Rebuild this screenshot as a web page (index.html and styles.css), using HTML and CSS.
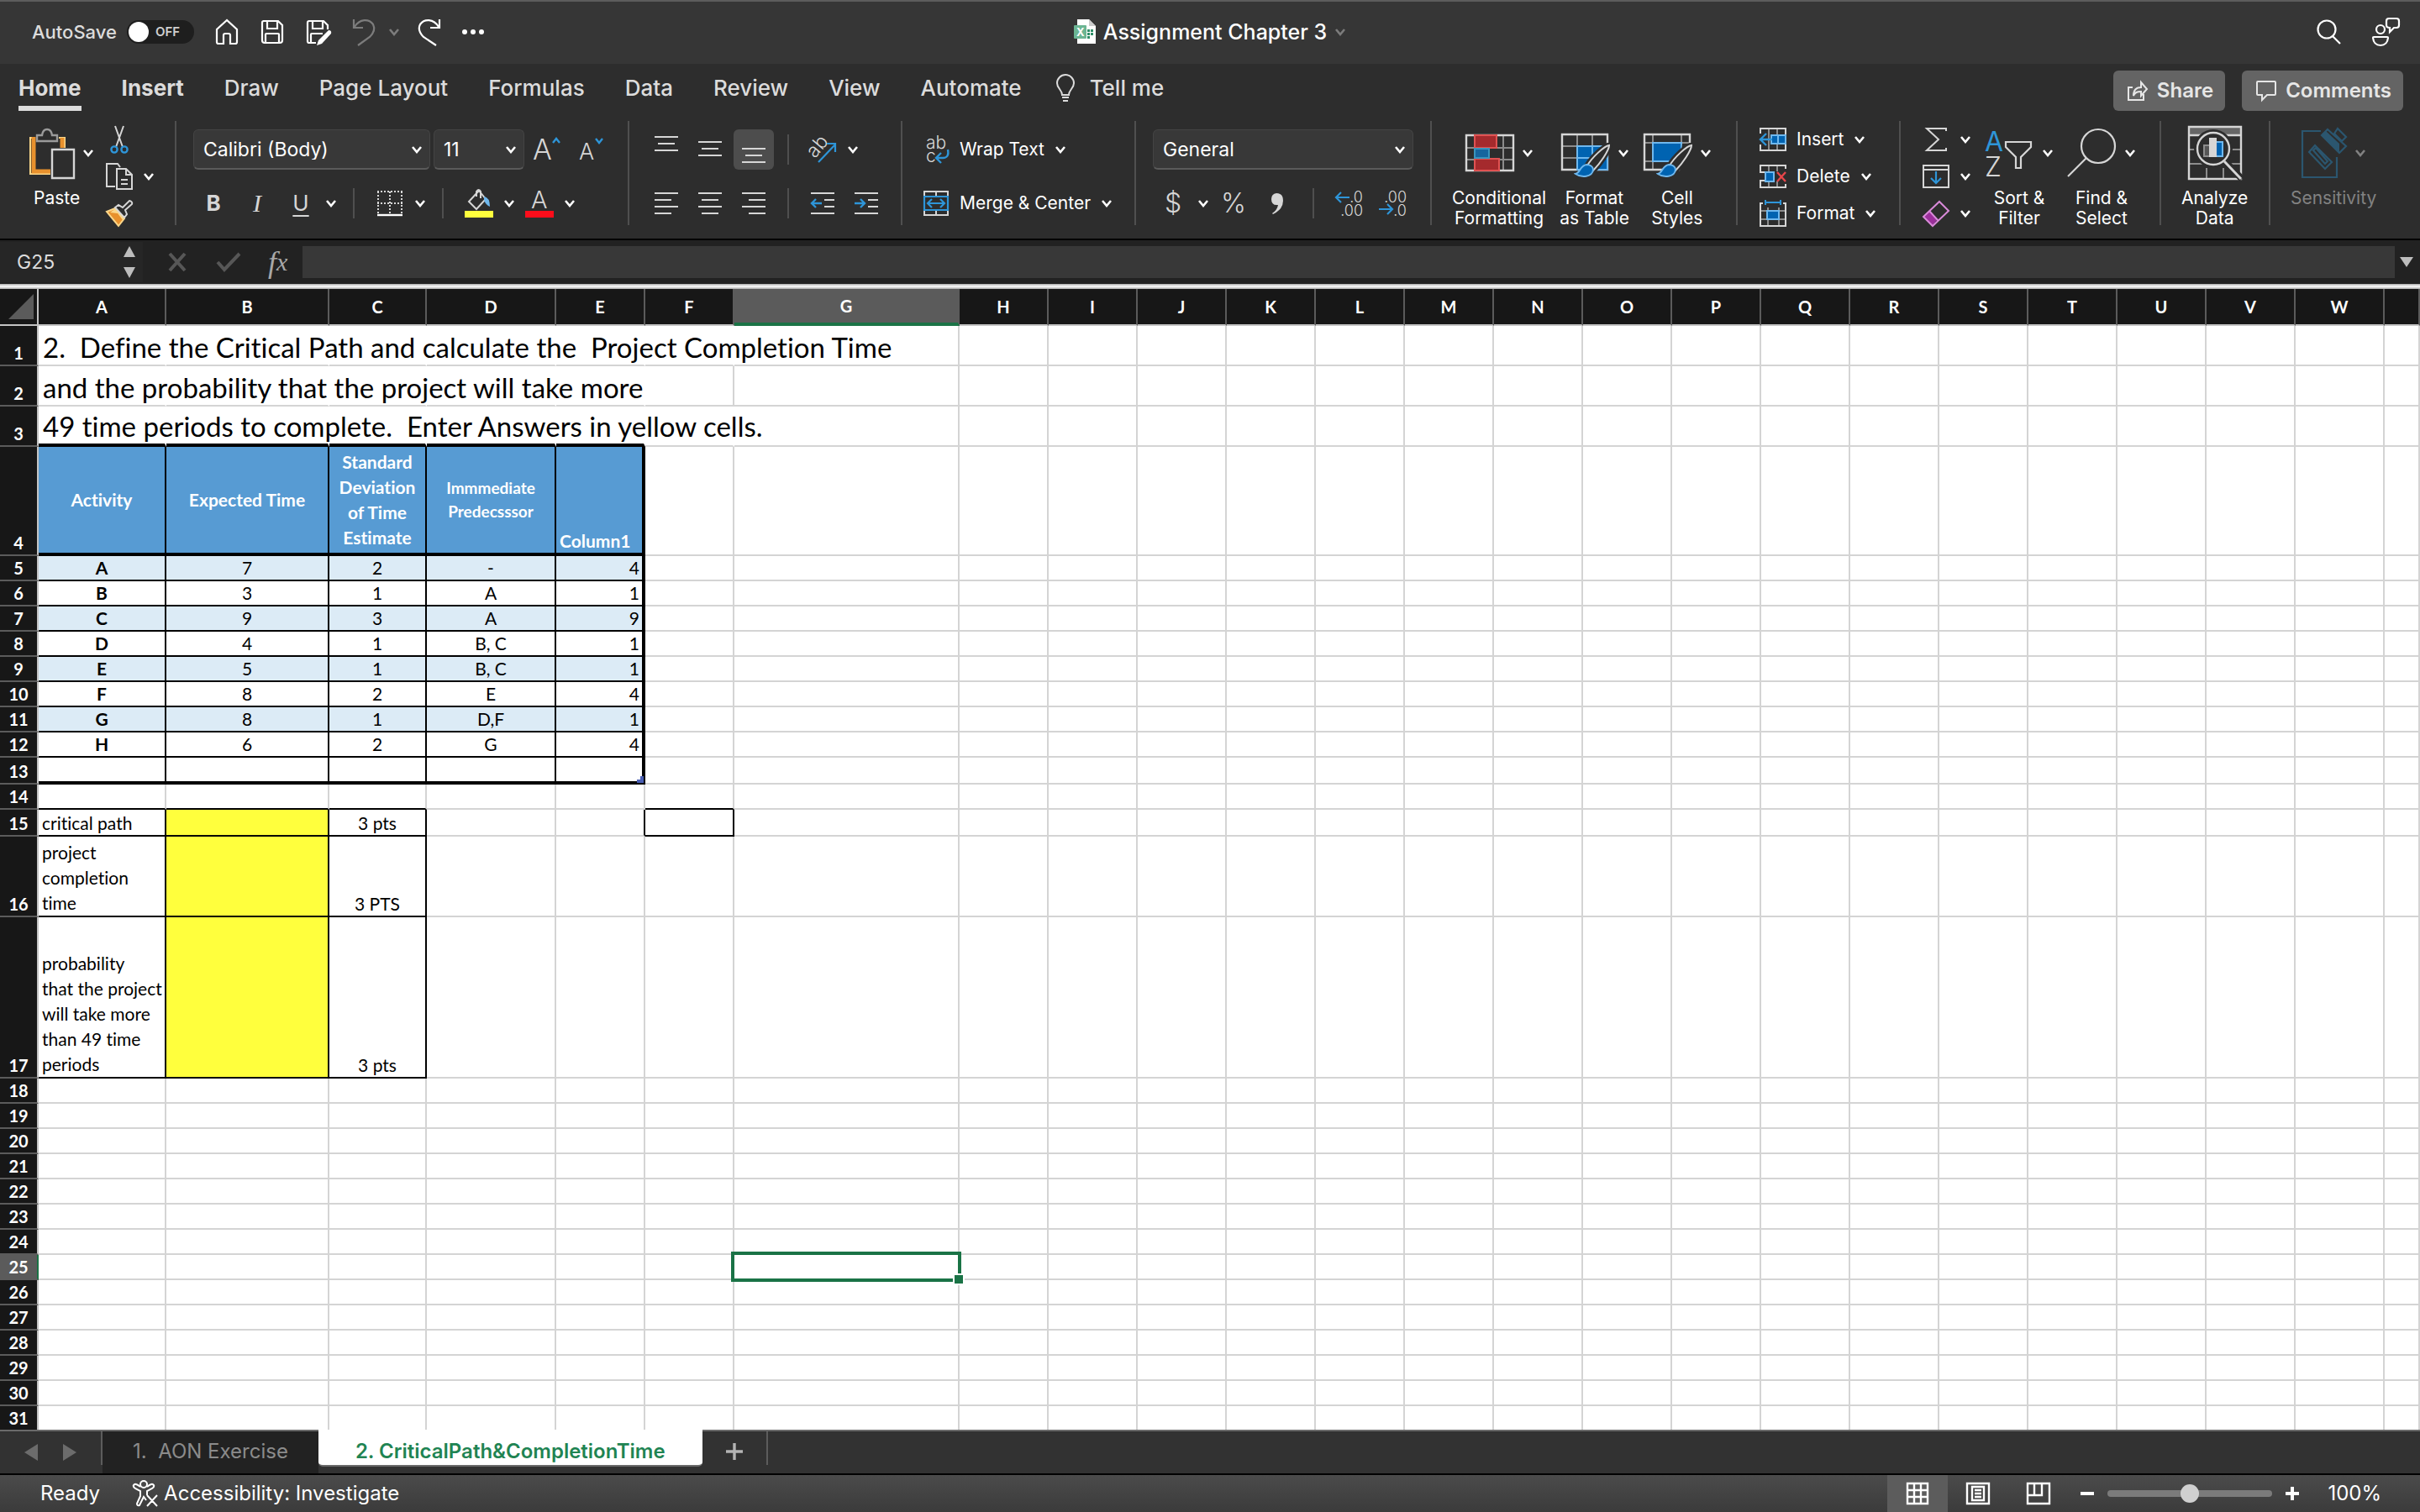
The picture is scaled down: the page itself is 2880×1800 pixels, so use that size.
FILE: index.html
```html
<!DOCTYPE html>
<html lang="en">
<head>
	<meta charset="UTF-8">
	<title>Assignment Chapter 3</title>
	<link rel="stylesheet" href="styles.css">
</head>
<body>
	<!-- shared icons -->
	<svg class="defs" width="0" height="0">
		<symbol id="chev" viewBox="0 0 14 10"><path d="M2 2l5 6 5-6" fill="none" stroke="currentColor" stroke-width="2.6"/></symbol>
		<symbol id="brush" viewBox="0 0 46 42">
			<path d="M42 3C36 4 22 17 16 27l7 6C31 25 42 9 42 3z" fill="#2d2d2d" stroke="#2d2d2d" stroke-width="7"/>
			<path d="M42 3C36 4 22 17 16 27l7 6C31 25 42 9 42 3z" fill="#2d2d2d" stroke="#d6d6d6" stroke-width="2"/>
			<path d="M15 26c-8 1-7 10-13 11 7 5 20 4 21-5 0-4-4-6-8-6z" fill="#0063b1" stroke="#6fb8ee" stroke-width="2"/>
		</symbol>
	</svg>

	<header class="titlebar">
		<div class="quick">
			<label class="autosave" for="autosave">AutoSave</label>
			<span class="toggle"><input type="checkbox" id="autosave"><span>OFF</span></span>
			<button aria-label="Home"><svg width="30" height="32" viewBox="0 0 30 32"><path d="M15 2L3 13v15q0 2 2 2h6V20q0-2 2-2h4q2 0 2 2v10h6q2 0 2-2V13z"/></svg></button>
			<button aria-label="Save"><svg width="30" height="32" viewBox="0 0 30 32"><path d="M4 3h18l5 5v18q0 3-3 3H6q-3 0-3-3V5q0-2 2-2zM9 3v9h12V3M7 29V19q0-1 1-1h14q1 0 1 1v10"/></svg></button>
			<button aria-label="Save as"><svg width="32" height="32" viewBox="0 0 32 32"><path d="M13 29H5q-2 0-2-2V5q0-2 2-2h17l5 5v5M9 3v9h12V3M7 29V19q0-1 1-1h13"/><path d="M28 14q4 0 3 4L20 30l-6 2 2-6z" fill="#fff" stroke="none"/></svg></button>
			<button aria-label="Undo" class="dim"><svg width="28" height="34" viewBox="0 0 28 34"><path d="M2 2v10h11M3 11C9 1 20 1 25 8c3 6 0 11-4 15L7 33"/></svg></button>
			<button aria-label="Undo list" class="dim caret"><svg width="14" height="10"><use href="#chev"/></svg></button>
			<button aria-label="Redo"><svg width="28" height="34" viewBox="0 0 28 34"><path d="M26 2v10H15M25 11C19 1 8 1 3 8c-3 6 0 11 4 15l15 10"/></svg></button>
			<button aria-label="More"><svg width="28" height="8" viewBox="0 0 28 8"><g fill="#fff" stroke="none"><circle cx="4" cy="4" r="3"/><circle cx="14" cy="4" r="3"/><circle cx="24" cy="4" r="3"/></g></svg></button>
		</div>
		<div class="doc">
			<svg width="28" height="32" viewBox="0 0 28 32"><path d="M5 1h14l8 8v21H5z" fill="#fff"/><path d="M19 1l8 8h-8z" fill="#ccc"/><path d="M17 13h3v3h-3zM21 13h3v3h-3zM17 17h3v3h-3zM21 17h3v3h-3zM17 21h3v3h-3z" fill="#2f8f68"/><rect x="1" y="8" width="15" height="16" rx="1" fill="#6bb593"/><text x="4" y="21" font-size="13" font-weight="700" fill="#fff">X</text></svg>
			<h1>Assignment Chapter 3</h1>
			<svg width="16" height="10" class="dim"><use href="#chev"/></svg>
		</div>
		<div class="corner">
			<button aria-label="Search"><svg width="32" height="32" viewBox="0 0 32 32"><circle cx="13" cy="13" r="10.5"/><path d="M20 21l9 9"/></svg></button>
			<button aria-label="Presence"><svg width="34" height="36" viewBox="0 0 34 36"><circle cx="11" cy="15" r="5"/><path d="M3 24h16q1 0 1 1-1 9-9 9t-9-9q0-1 1-1zM21 2h9q3 0 3 3v5q0 3-3 3h-3l-5 5v-5q-4 0-4-3V5q0-3 3-3z"/></svg></button>
		</div>
	</header>

	<nav class="tabs">
		<a href="#" class="on">Home</a>
		<a href="#" class="bold">Insert</a>
		<a href="#">Draw</a>
		<a href="#">Page Layout</a>
		<a href="#">Formulas</a>
		<a href="#">Data</a>
		<a href="#">Review</a>
		<a href="#">View</a>
		<a href="#">Automate</a>
		<a href="#" class="tell"><svg width="24" height="34" viewBox="0 0 24 34"><path d="M8 25c0-6-6-8-6-14a10 10 0 0 1 20 0c0 6-6 8-6 14zM8 28h8M9 32h6" fill="none" stroke="#dcdcdc" stroke-width="2"/></svg>Tell me</a>
		<div class="share">
			<button><svg width="26" height="26" viewBox="0 0 26 26"><path d="M7 9H2v15h18v-7M8 19c0-8 4-10 9-10V3l7 8-7 8v-5c-5 0-7 1-9 5z"/></svg>Share</button>
			<button><svg width="26" height="26" viewBox="0 0 26 26"><path d="M3 2h20q1 0 1 1v14q0 1-1 1H14l-6 6v-6H3q-1 0-1-1V3q0-1 1-1z"/></svg>Comments</button>
		</div>
	</nav>

	<section class="ribbon">
		<div class="group g-clip">
			<button class="big">
				<span class="pic"><svg width="56" height="64" viewBox="0 0 56 64"><path d="M8 14H2v43h24M36 14h7v12" fill="none" stroke="#fbd78a" stroke-width="2"/><path d="M6 13v41h20M40 14v12" fill="none" stroke="#e8912d" stroke-width="5"/><path d="M10 18v-7h6q1-7 6-7t6 7h6v7z" fill="#2d2d2d" stroke="#9a9a9a" stroke-width="2.4"/><path d="M28 28h26v34H28z" fill="#2d2d2d" stroke="#d6d6d6" stroke-width="2.4"/></svg><svg width="14" height="10"><use href="#chev"/></svg></span>
				<span>Paste</span>
			</button>
			<div class="stack">
				<button aria-label="Cut"><svg width="32" height="34" viewBox="0 0 32 34"><path d="M11 1l9 25M21 1l-9 25" fill="none" stroke="#d6d6d6" stroke-width="2"/><circle cx="10" cy="29" r="3.6" fill="none" stroke="#2e95d8" stroke-width="2.4"/><circle cx="22" cy="29" r="3.6" fill="none" stroke="#2e95d8" stroke-width="2.4"/></svg></button>
				<button aria-label="Copy"><svg width="32" height="32" viewBox="0 0 32 32"><path d="M11 28H1V1h13l3 4" fill="none" stroke="#d6d6d6" stroke-width="2"/><path d="M13 7h11l7 7v17H13zM24 7v7h7M18 20h8M18 25h8" fill="none" stroke="#d6d6d6" stroke-width="2"/></svg><svg width="14" height="10"><use href="#chev"/></svg></button>
				<button aria-label="Format painter"><svg width="32" height="32" viewBox="0 0 32 32"><path d="M1 14l10-4 11 12-7 9z" fill="#e8912d" stroke="#fbd78a" stroke-width="2"/><path d="M5 15l9 1 6 8 3-4-11-10z" fill="#fbd78a"/><path d="M11 9l4-3 5 3 8-8q4 1 3 4l-8 7 2 5-3 4z" fill="#2d2d2d" stroke="#d6d6d6" stroke-width="2"/></svg></button>
			</div>
		</div>

		<div class="group g-font">
			<div class="rows">
				<div class="row">
					<span class="drop font"><select aria-label="Font"><option>Calibri (Body)</option></select><svg width="14" height="10"><use href="#chev"/></svg></span>
					<span class="drop size"><select aria-label="Font size"><option>11</option></select><svg width="14" height="10"><use href="#chev"/></svg></span>
					<button class="tool" aria-label="Grow font"><svg width="36" height="36" viewBox="0 0 36 36"><text x="0" y="30" font-size="34" font-weight="300" fill="#d6d6d6">A</text><path d="M24 10l4-5 4 5" fill="none" stroke="#2e95d8" stroke-width="2.4"/></svg></button>
					<button class="tool" aria-label="Shrink font"><svg width="36" height="36" viewBox="0 0 36 36"><text x="3" y="30" font-size="27" font-weight="300" fill="#d6d6d6">A</text><path d="M23 5l4 5 4-5" fill="none" stroke="#2e95d8" stroke-width="2.4"/></svg></button>
				</div>
				<div class="row">
					<button class="tool b">B</button>
					<button class="tool i">I</button>
					<button class="tool u">U</button>
					<button class="caret" aria-label="Underline options"><svg width="14" height="10"><use href="#chev"/></svg></button>
					<span class="vsep"></span>
					<button class="tool" aria-label="Borders"><svg width="32" height="32" viewBox="0 0 32 32"><path d="M1 2h30M1 16h30M2 2v26M16 2v26M30 2v26" fill="none" stroke="#d6d6d6" stroke-width="2" stroke-dasharray="2 2"/><path d="M1 30h30" stroke="#fff" stroke-width="2.4"/></svg></button>
					<button class="caret" aria-label="Border options"><svg width="14" height="10"><use href="#chev"/></svg></button>
					<span class="vsep"></span>
					<button class="tool" aria-label="Fill color"><svg width="34" height="34" viewBox="0 0 34 34"><path d="M17 2L5 15l9 9 11-12zM14 9V3q3-4 5 0v8" fill="none" stroke="#d6d6d6" stroke-width="2"/><path d="M23 9q7 1 7 12-5-2-7-8z" fill="#6fb8ee"/><path d="M0 26h34v8H0z" fill="#ffff3d"/></svg></button>
					<button class="caret" aria-label="Fill options"><svg width="14" height="10"><use href="#chev"/></svg></button>
					<button class="tool" aria-label="Font color"><svg width="34" height="34" viewBox="0 0 34 34"><text x="7" y="23" font-size="29" font-weight="300" fill="#d6d6d6">A</text><path d="M0 26h34v8H0z" fill="#fc0d1b"/></svg></button>
					<button class="caret" aria-label="Font color options"><svg width="14" height="10"><use href="#chev"/></svg></button>
				</div>
			</div>
		</div>

		<div class="group g-align">
			<div class="rows">
				<div class="row">
					<button class="tool lines" aria-label="Top align"><svg width="28" height="32" viewBox="0 0 28 32"><path d="M0 1h28M4 9h20M0 17h28"/></svg></button>
					<button class="tool lines" aria-label="Middle align"><svg width="28" height="32" viewBox="0 0 28 32"><path d="M0 7h28M4 15h20M0 23h28"/></svg></button>
					<button class="tool lines pressed" aria-label="Bottom align"><svg width="28" height="32" viewBox="0 0 28 32"><path d="M0 15h28M4 23h20M0 31h28"/></svg></button>
					<span class="vsep tight"></span>
					<button class="tool" aria-label="Orientation"><svg width="36" height="34" viewBox="0 0 36 34"><text x="4" y="24" font-size="23" font-weight="300" fill="#d6d6d6" transform="rotate(-50 11 21)">ab</text><path d="M13 32L33 11M23 10h10v10" fill="none" stroke="#2e95d8" stroke-width="2.2"/></svg></button>
					<button class="caret" aria-label="Orientation options"><svg width="14" height="10"><use href="#chev"/></svg></button>
				</div>
				<div class="row">
					<button class="tool lines" aria-label="Align left"><svg width="28" height="28" viewBox="0 0 28 28"><path d="M0 2h28M0 10h20M0 18h28M0 26h20"/></svg></button>
					<button class="tool lines" aria-label="Center"><svg width="28" height="28" viewBox="0 0 28 28"><path d="M0 2h28M4 10h20M0 18h28M4 26h20"/></svg></button>
					<button class="tool lines" aria-label="Align right"><svg width="28" height="28" viewBox="0 0 28 28"><path d="M0 2h28M8 10h20M0 18h28M8 26h20"/></svg></button>
					<span class="vsep tight"></span>
					<button class="tool lines" aria-label="Decrease indent"><svg width="28" height="28" viewBox="0 0 28 28"><path d="M0 2h28M16 10h12M16 18h12M0 26h28"/><path class="blue" d="M13 14H1M6 9l-5 5 5 5"/></svg></button>
					<button class="tool lines" aria-label="Increase indent"><svg width="28" height="28" viewBox="0 0 28 28"><path d="M0 2h28M16 10h12M16 18h12M0 26h28"/><path class="blue" d="M0 14h12M7 9l5 5-5 5"/></svg></button>
				</div>
			</div>
		</div>

		<div class="group g-wrap">
			<div class="rows">
				<button class="row wide"><svg width="32" height="34" viewBox="0 0 32 34"><text x="4" y="16" font-size="21" font-weight="300" fill="#d6d6d6">ab</text><text x="4" y="32" font-size="21" font-weight="300" fill="#d6d6d6">c</text><path d="M30 17q2 10-6 10h-7M22 21l-6 6 6 6" fill="none" stroke="#2e95d8" stroke-width="2.4"/></svg>Wrap Text<svg width="14" height="10"><use href="#chev"/></svg></button>
				<button class="row wide"><svg width="32" height="32" viewBox="0 0 32 32"><path d="M2 8V2h28v6M16 2v6M2 24v6h28v-6M16 24v6" fill="none" stroke="#d6d6d6" stroke-width="2"/><path d="M2 8h28v16H2zM7 16h18M11 11l-5 5 5 5M21 11l5 5-5 5" fill="none" stroke="#2e95d8" stroke-width="2.2"/></svg>Merge &amp; Center<svg width="14" height="10"><use href="#chev"/></svg></button>
			</div>
		</div>

		<div class="group g-num">
			<div class="rows">
				<div class="row">
					<span class="drop format"><select aria-label="Number format"><option>General</option></select><svg width="14" height="10"><use href="#chev"/></svg></span>
				</div>
				<div class="row">
					<button class="tool glyph">$</button>
					<button class="caret" aria-label="Currency options"><svg width="14" height="10"><use href="#chev"/></svg></button>
					<button class="tool glyph">%</button>
					<button class="tool" aria-label="Comma style"><svg width="16" height="28" viewBox="0 0 16 28"><path d="M7 2q8 0 8 9 0 10-12 16l-1-1q6-4 7-10-8 1-8-7 0-6 6-7z" fill="#d6d6d6"/></svg></button>
					<span class="vsep"></span>
					<button class="tool" aria-label="Increase decimal"><svg width="34" height="34" viewBox="0 0 34 34"><g font-size="18" font-weight="300" fill="#d6d6d6" text-anchor="end"><text x="33" y="16">.0</text><text x="33" y="32">.00</text></g><path d="M17 10H1M7 4l-6 6 6 6" fill="none" stroke="#2e95d8" stroke-width="2.2"/></svg></button>
					<button class="tool" aria-label="Decrease decimal"><svg width="34" height="34" viewBox="0 0 34 34"><g font-size="18" font-weight="300" fill="#d6d6d6" text-anchor="end"><text x="33" y="16">.00</text><text x="33" y="32">.0</text></g><path d="M0 24h16M10 18l6 6-6 6" fill="none" stroke="#2e95d8" stroke-width="2.2"/></svg></button>
				</div>
			</div>
		</div>

		<div class="group g-style">
			<button class="big">
				<span class="pic"><svg width="60" height="48" viewBox="0 0 60 48"><path d="M3 18h54M3 32h54M13 3v42M46 3v42" fill="none" stroke="#8c8c8c" stroke-width="2"/><path d="M2 3h56v42H2z" fill="none" stroke="#d6d6d6" stroke-width="2.4"/><path d="M12 3h26v15H12zM12 31h29v14H12z" fill="#a52a2d" stroke="#e05252" stroke-width="2"/><path d="M12 19h17v11H12z" fill="#16659e" stroke="#3a94bd" stroke-width="2"/></svg><svg width="14" height="10"><use href="#chev"/></svg></span>
				<span>Conditional<br>Formatting</span>
			</button>
			<button class="big">
				<span class="pic"><svg width="60" height="60" viewBox="0 0 60 60"><path d="M2 22h54M2 36h54M20 8v42M38 8v42" fill="none" stroke="#8c8c8c" stroke-width="2"/><path d="M2 8h54v42H2z" fill="none" stroke="#d6d6d6" stroke-width="2.4"/><path d="M20 22h36v28H20z" fill="#0063b1" stroke="#6fb8ee" stroke-width="2"/><path d="M20 36h36M38 22v28" stroke="#6fb8ee" stroke-width="2"/><use href="#brush" x="16" y="18" width="46" height="42"/></svg><svg width="14" height="10"><use href="#chev"/></svg></span>
				<span>Format<br>as Table</span>
			</button>
			<button class="big">
				<span class="pic"><svg width="60" height="60" viewBox="0 0 60 60"><path d="M2 18h54M2 40h54M12 8v42M46 8v42" fill="none" stroke="#8c8c8c" stroke-width="2"/><path d="M2 8h54v42H2z" fill="none" stroke="#d6d6d6" stroke-width="2.4"/><path d="M12 18h34v22H12z" fill="#0063b1" stroke="#6fb8ee" stroke-width="2"/><path d="M47 19h12v33H44z" fill="#2d2d2d"/><use href="#brush" x="16" y="18" width="46" height="42"/></svg><svg width="14" height="10"><use href="#chev"/></svg></span>
				<span>Cell<br>Styles</span>
			</button>
		</div>

		<div class="group g-cells">
			<div class="stack">
				<button><svg width="32" height="30" viewBox="0 0 32 30"><path d="M11 1v28M21 1v28" stroke="#8c8c8c" stroke-width="2"/><path d="M1 8V2h30v26H1v-7" fill="none" stroke="#d6d6d6" stroke-width="2"/><path d="M14 10h17v10H14z" fill="#0063b1" stroke="#6fb8ee" stroke-width="2"/><path d="M22 10v10" stroke="#6fb8ee" stroke-width="2"/><path d="M15 15H2M8 8l-7 7 7 7" fill="none" stroke="#2e95d8" stroke-width="2.4"/></svg>Insert<svg width="14" height="10"><use href="#chev"/></svg></button>
				<button><svg width="32" height="30" viewBox="0 0 32 30"><path d="M11 1v8M21 1v8M11 21v8M21 21v8" stroke="#8c8c8c" stroke-width="2"/><path d="M31 6V2H1v8h6M31 24v4H1v-8h6" fill="none" stroke="#d6d6d6" stroke-width="2"/><path d="M7 10h10v11H7z" fill="#0063b1" stroke="#6fb8ee" stroke-width="2"/><path d="M21 10l10 11M31 10L21 21" stroke="#e8464a" stroke-width="2.4"/></svg>Delete<svg width="14" height="10"><use href="#chev"/></svg></button>
				<button><svg width="32" height="34" viewBox="0 0 32 34"><path d="M10 10v22M23 10v22M2 14h28M2 24h28" stroke="#8c8c8c" stroke-width="2"/><path d="M4 5H1v27h30V5h-3" fill="none" stroke="#d6d6d6" stroke-width="2"/><path d="M9 14h14v10H9z" fill="#0063b1" stroke="#6fb8ee" stroke-width="2"/><path d="M7 1v6M25 1v6M7 4h18" stroke="#2e95d8" stroke-width="2"/></svg>Format<svg width="14" height="10"><use href="#chev"/></svg></button>
			</div>
		</div>

		<div class="group g-edit">
			<div class="stack">
				<button aria-label="AutoSum"><svg width="32" height="30" viewBox="0 0 32 30"><path d="M28 5V2H5l14 13L5 28h23v-3" fill="none" stroke="#d6d6d6" stroke-width="2"/></svg><svg width="14" height="10"><use href="#chev"/></svg></button>
				<button aria-label="Fill"><svg width="32" height="30" viewBox="0 0 32 30"><path d="M1 2h30v26H1zM1 7h30" fill="none" stroke="#d6d6d6" stroke-width="2"/><path d="M16 9v14M10 17l6 6 6-6" fill="none" stroke="#2e95d8" stroke-width="2.2"/></svg><svg width="14" height="10"><use href="#chev"/></svg></button>
				<button aria-label="Clear"><svg width="32" height="32" viewBox="0 0 32 32"><path d="M1 20l7-7 10 10-7 8z" fill="#9b2f9b"/><path d="M20 2l11 11-19 18L1 20zM8 13l10 11" fill="none" stroke="#d98ad9" stroke-width="2"/></svg><svg width="14" height="10"><use href="#chev"/></svg></button>
			</div>
			<button class="big">
				<span class="pic"><svg width="60" height="60" viewBox="0 0 60 60"><text x="0" y="28" font-size="32" fill="#2e95d8">A</text><text x="0" y="58" font-size="32" font-weight="300" fill="#d6d6d6">Z</text><path d="M25 17h30v6L43 35v13h-6V35L25 23z" fill="#2d2d2d" stroke="#d6d6d6" stroke-width="2.2"/></svg><svg width="14" height="10"><use href="#chev"/></svg></span>
				<span>Sort &amp;<br>Filter</span>
			</button>
			<button class="big">
				<span class="pic"><svg width="60" height="60" viewBox="0 0 60 60"><circle cx="37" cy="22" r="20" fill="none" stroke="#d6d6d6" stroke-width="2.2"/><path d="M23 36L1 58" stroke="#d6d6d6" stroke-width="2.2"/></svg><svg width="14" height="10"><use href="#chev"/></svg></span>
				<span>Find &amp;<br>Select</span>
			</button>
		</div>

		<div class="group g-data">
			<button class="big">
				<span class="pic"><svg width="64" height="64" viewBox="0 0 64 64"><path d="M1 1h62v10H1z" fill="#666"/><path d="M1 28h62M1 45h62M22 50v13M42 50v13" stroke="#8c8c8c" stroke-width="2"/><path d="M1 1h62v62H1zM1 11h62" fill="none" stroke="#d6d6d6" stroke-width="2.4"/><circle cx="30" cy="27" r="23" fill="#2d2d2d"/><circle cx="30" cy="27" r="19" fill="#2d2d2d" stroke="#d6d6d6" stroke-width="2.4"/><path d="M44 42l20 21" stroke="#2d2d2d" stroke-width="8"/><path d="M43 42l20 21" stroke="#d6d6d6" stroke-width="3"/><path d="M19 23h7v13h-7z" fill="#555" stroke="#8c8c8c" stroke-width="2"/><path d="M33 19h8v17h-8z" fill="#0063b1" stroke="#6fb8ee" stroke-width="2"/><path d="M25 14h9v23h-9z" fill="#d6d6d6"/></svg></span>
				<span>Analyze<br>Data</span>
			</button>
		</div>

		<div class="group g-sens">
			<button class="big" disabled>
				<span class="pic"><svg width="56" height="62" viewBox="0 0 56 62"><g fill="none" stroke="#2b566f" stroke-width="2.2"><path d="M24 5H2v55h41V36"/><path d="M10 30l7-8 20 20-8 8zM15 28l3-3 14 16-3 3z"/><path d="M25 10l7-7 22 20-8 8z"/><path d="M40 8l4-6 10 10-5 5z"/></g><path d="M25 10l5-5 16 15v11z" fill="#2b566f"/></svg><svg width="14" height="10"><use href="#chev"/></svg></span>
				<span>Sensitivity</span>
			</button>
		</div>
	</section>

	<div class="formula">
		<div class="namebox">
			<input type="text" value="G25" aria-label="Name box">
			<svg width="16" height="38" viewBox="0 0 16 38"><path d="M8 0l7 13H1zM8 38l7-13H1z" fill="#bdbdbd"/></svg>
		</div>
		<button aria-label="Cancel"><svg width="28" height="24" viewBox="0 0 28 24"><path d="M5 2l18 20M23 2L5 22" stroke="#575757" stroke-width="4"/></svg></button>
		<button aria-label="Enter"><svg width="30" height="24" viewBox="0 0 30 24"><path d="M2 12l8 9L28 2" fill="none" stroke="#575757" stroke-width="4"/></svg></button>
		<button class="fx" aria-label="Insert function">f<small>x</small></button>
		<input type="text" class="bar" aria-label="Formula bar">
		<button class="expand" aria-label="Expand"><svg width="16" height="12" viewBox="0 0 16 12"><path d="M0 0h16L8 12z" fill="#bdbdbd"/></svg></button>
	</div>

	<main class="sheet">
		<table id="grid">
			<colgroup>
				<col class="w-head"><col class="w-a"><col class="w-b"><col class="w-c"><col class="w-d"><col class="w"><col class="w"><col class="w-g">
				<col class="w"><col class="w"><col class="w"><col class="w"><col class="w"><col class="w"><col class="w"><col class="w">
				<col class="w"><col class="w"><col class="w"><col class="w"><col class="w"><col class="w"><col class="w"><col class="w"><col>
			</colgroup>
			<thead>
				<tr><th class="all"><svg width="30" height="30" viewBox="0 0 30 30"><path d="M30 0v30H0z" fill="#5b5b5b"/></svg></th><th>A</th><th>B</th><th>C</th><th>D</th><th>E</th><th>F</th><th class="sel">G</th><th>H</th><th>I</th><th>J</th><th>K</th><th>L</th><th>M</th><th>N</th><th>O</th><th>P</th><th>Q</th><th>R</th><th>S</th><th>T</th><th>U</th><th>V</th><th>W</th><th></th></tr>
			</thead>
			<tbody>
				<tr class="h48"><th>1</th><td class="title spill">2.  Define the Critical Path and calculate the  Project Completion Time</td><td class="spill"></td><td class="spill"></td><td class="spill"></td><td class="spill"></td><td class="spill"></td></tr>
				<tr class="h48"><th>2</th><td class="title spill">and the probability that the project will take more</td><td class="spill"></td><td class="spill"></td><td class="spill"></td><td class="spill"></td></tr>
				<tr class="h48"><th>3</th><td class="title spill edge">49 time periods to complete.  Enter Answers in yellow cells.</td><td class="spill edge"></td><td class="spill edge"></td><td class="spill edge"></td><td class="spill edge"></td><td class="spill"></td></tr>
				<tr class="h130"><th>4</th><td class="hd">Activity</td><td class="hd">Expected Time</td><td class="hd">Standard Deviation of Time Estimate</td><td class="hd small">Immmediate Predecsssor</td><td class="hd low last">Column1</td></tr>
				<tr class="band"><th>5</th><td class="k"><b>A</b></td><td class="k">7</td><td class="k">2</td><td class="k">-</td><td class="k num last">4</td></tr>
				<tr><th>6</th><td class="k"><b>B</b></td><td class="k">3</td><td class="k">1</td><td class="k">A</td><td class="k num last">1</td></tr>
				<tr class="band"><th>7</th><td class="k"><b>C</b></td><td class="k">9</td><td class="k">3</td><td class="k">A</td><td class="k num last">9</td></tr>
				<tr><th>8</th><td class="k"><b>D</b></td><td class="k">4</td><td class="k">1</td><td class="k">B, C</td><td class="k num last">1</td></tr>
				<tr class="band"><th>9</th><td class="k"><b>E</b></td><td class="k">5</td><td class="k">1</td><td class="k">B, C</td><td class="k num last">1</td></tr>
				<tr><th>10</th><td class="k"><b>F</b></td><td class="k">8</td><td class="k">2</td><td class="k">E</td><td class="k num last">4</td></tr>
				<tr class="band"><th>11</th><td class="k"><b>G</b></td><td class="k">8</td><td class="k">1</td><td class="k">D,F</td><td class="k num last">1</td></tr>
				<tr><th>12</th><td class="k"><b>H</b></td><td class="k">6</td><td class="k">2</td><td class="k">G</td><td class="k num last">4</td></tr>
				<tr class="h32"><th>13</th><td class="k edge"></td><td class="k edge"></td><td class="k edge"></td><td class="k edge"></td><td class="k edge last"><i class="resize"></i></td></tr>
				<tr><th>14</th><td class="under"></td><td class="under"></td><td class="under"></td><td></td><td></td><td class="under"></td></tr>
				<tr class="h32"><th>15</th><td class="k left">critical path</td><td class="k yellow"></td><td class="k">3 pts</td><td></td><td class="side"></td><td class="k"></td></tr>
				<tr class="h96"><th>16</th><td class="k left">project<br>completion<br>time</td><td class="k yellow"></td><td class="k">3 PTS</td></tr>
				<tr class="h192"><th>17</th><td class="k left">probability<br>that the project<br>will take more<br>than 49 time<br>periods</td><td class="k yellow"></td><td class="k">3 pts</td></tr>
			</tbody>
		</table>
	</main>

	<nav class="sheets">
		<div class="arrows">
			<button aria-label="Previous sheet"><svg width="16" height="20" viewBox="0 0 16 20"><path d="M16 0v20L0 10z" fill="#6c6c6c"/></svg></button>
			<button aria-label="Next sheet"><svg width="16" height="20" viewBox="0 0 16 20"><path d="M0 0v20l16-10z" fill="#6c6c6c"/></svg></button>
		</div>
		<a href="#" class="tab">1.  AON Exercise</a>
		<a href="#" class="tab open">2. CriticalPath&amp;CompletionTime</a>
		<button class="add" aria-label="Add sheet"><svg width="20" height="20" viewBox="0 0 20 20"><path d="M10 0v20M0 10h20" stroke="#b4b4b4" stroke-width="3.4"/></svg></button>
	</nav>

	<footer class="status">
		<span>Ready</span>
		<button class="access"><svg width="32" height="32" viewBox="0 0 32 32"><g fill="none" stroke="#fff" stroke-width="2"><circle cx="14" cy="5" r="4"/><path d="M10 8q-6-5-8-2-1 2 2 4l6 3v6L6 28q0 3 3 2l5-10 3 4M18 8q6-5 8-2 1 2-2 4l-6 3v5M18 18l12 13M30 18L18 31"/></g></svg>Accessibility: Investigate</button>
		<div class="views">
			<button class="on" aria-label="Normal"><svg width="28" height="28" viewBox="0 0 28 28"><path d="M2 2h24v24H2zM10 2v24M18 2v24M2 10h24M2 18h24"/></svg></button>
			<button aria-label="Page layout"><svg width="28" height="28" viewBox="0 0 28 28"><path d="M1 2h26v24H1zM7 6h14v16H7zM10 10h8M10 14h8M10 18h8"/></svg></button>
			<button aria-label="Page break"><svg width="28" height="28" viewBox="0 0 28 28"><path d="M1 2h26v24H1zM1 16h17V2M9 2v14"/></svg></button>
		</div>
		<button class="step" aria-label="Zoom out"><svg width="16" height="16" viewBox="0 0 16 16"><path d="M0 8h16" stroke="#fff" stroke-width="4"/></svg></button>
		<input type="range" min="0" max="100" value="50" aria-label="Zoom">
		<button class="step" aria-label="Zoom in"><svg width="16" height="16" viewBox="0 0 16 16"><path d="M0 8h16M8 0v16" stroke="#fff" stroke-width="4"/></svg></button>
		<span class="pct">100%</span>
	</footer>

	<script src="grid.js"></script>
</body>
</html>
```
FILE: grid.js
```js
var body = document.getElementById("grid").tBodies[0];
var cols = 25;
var lastRow = 31;

// rows below the data are empty
for (var r = body.rows.length + 1; r <= lastRow; r++) {
	var tr = document.createElement("tr");
	var th = document.createElement("th");
	th.innerHTML = r;
	tr.appendChild(th);
	body.appendChild(tr);
}

// fill every row up to the last column
for (var i = 0; i < body.rows.length; i++) {
	var row = body.rows[i];
	while (row.cells.length < cols) {
		row.insertCell(-1);
	}
}

// selected cell G25
var current = body.rows[24].cells[7];
body.rows[24].cells[0].className = "sel";
current.className = "current";
current.innerHTML = '<div class="ring"><i></i></div>';
```
FILE: styles.css
```css
*{
	box-sizing: border-box;
	margin: 0;
	padding: 0;
}
body{
	display: flex;
	flex-direction: column;
	height: 100vh;
	overflow: hidden;
	background: #2d2d2d;
	color: #fff;
	font: 22px/24px Inter, "Liberation Sans", sans-serif;
}
button, input, select{
	border: 0;
	background: none;
	color: inherit;
	font: inherit;
}
button{
	display: flex;
	align-items: center;
	justify-content: center;
}
a{
	color: inherit;
	text-decoration: none;
}
svg{
	flex: none;
	display: block;
	overflow: visible;
}
.defs{
	position: absolute;
}

/* title bar */
.titlebar{
	display: grid;
	grid-template-columns: 1fr auto 1fr;
	align-items: center;
	height: 76px;
	padding-bottom: 2px;
	flex: none;
	border-top: 2px solid #5c5c5c;
	background: #363636;
}
.titlebar button svg{
	fill: none;
	stroke: currentColor;
	stroke-width: 2.2;
}
.quick{
	display: flex;
	align-items: center;
	gap: 24px;
	padding-left: 38px;
}
.autosave{
	color: #dcdcdc;
	font-weight: 500;
	margin-right: -12px;
}
.toggle{
	display: flex;
	align-items: center;
	gap: 8px;
	width: 80px;
	height: 28px;
	padding-left: 2px;
	border-radius: 14px;
	background: #1e1e1e;
	color: #cfcfcf;
	font-size: 15px;
	font-weight: 600;
}
.toggle input{
	appearance: none;
	width: 24px;
	height: 24px;
	border-radius: 50%;
	background: #fff;
}
.quick .caret{
	margin: 0 -4px 0 -10px;
}
.dim{
	color: #7c7c7c;
}
.doc{
	display: flex;
	align-items: center;
	gap: 8px;
}
.doc h1{
	font-size: 25px;
	font-weight: 500;
}
.corner{
	display: flex;
	justify-content: flex-end;
	gap: 34px;
	padding-right: 24px;
}

/* ribbon tabs */
.tabs{
	display: flex;
	flex: none;
	align-items: flex-start;
	gap: 48px;
	height: 68px;
	padding: 8px 20px 0 22px;
	color: #dcdcdc;
	font-size: 26px;
	font-weight: 500;
}
.tabs a{
	height: 48px;
	padding: 9px 0;
	border-bottom: 6px solid transparent;
}
.tabs .on{
	border-color: #dcdcdc;
	font-weight: 700;
}
.tabs .bold{
	font-weight: 700;
}
.tabs .tell{
	display: flex;
	align-items: center;
	gap: 17px;
	margin-left: -8px;
}
.share{
	display: flex;
	gap: 20px;
	margin-left: auto;
}
.share button{
	gap: 10px;
	height: 48px;
	padding: 0 14px 0 16px;
	border-radius: 6px;
	background: #646464;
	color: #e6e6e6;
	font-size: 24px;
	font-weight: 600;
}
.share svg{
	fill: none;
	stroke: currentColor;
	stroke-width: 2;
}

/* ribbon */
.ribbon{
	display: flex;
	flex: none;
	height: 142px;
	padding-bottom: 16px;
	border-bottom: 2px solid #000;
}
.group{
	display: flex;
	align-items: flex-start;
	flex: none;
	gap: 16px;
	height: 124px;
	border-right: 2px solid #4f4f4f;
}
.g-clip{ width: 210px; padding-left: 34px; }
.g-font{ width: 539px; padding-left: 20px; }
.g-align{ width: 325px; padding-left: 20px; }
.g-wrap{ width: 278px; padding-left: 24px; }
.g-num{ width: 352px; padding-left: 20px; }
.g-style{ width: 364px; padding-left: 24px; }
.g-cells{ width: 194px; padding-left: 26px; }
.g-edit{ width: 310px; padding-left: 26px; }
.g-data{ width: 130px; padding-left: 24px; }
.g-sens{ padding-left: 24px; border: 0; }

.g-clip{
	gap: 14px;
}
.g-clip .big{
	align-items: flex-start;
}
.g-clip .pic + span{
	padding-left: 6px;
}
.rows{
	display: flex;
	flex-direction: column;
	gap: 16px;
	padding-top: 10px;
}
.row{
	display: flex;
	align-items: center;
	gap: 4px;
	height: 48px;
}
.row.wide{
	justify-content: flex-start;
	gap: 12px;
	font-size: 21px;
}
.tool{
	width: 48px;
	height: 48px;
	color: #d6d6d6;
}
.tool.b, .tool.i, .tool.u{
	font-size: 26px;
}
.tool.b{
	font-weight: 700;
}
.tool.i{
	font-family: "Liberation Serif", serif;
	font-size: 30px;
	font-style: italic;
}
.tool.u{
	text-decoration: underline;
	text-underline-offset: 5px;
}
.tool.glyph{
	font-size: 32px;
	font-weight: 300;
}
.pressed{
	border-radius: 6px;
	background: #4d4d4d;
}
.caret{
	width: 16px;
	height: 48px;
}
.lines svg{
	fill: none;
	stroke: #d6d6d6;
	stroke-width: 2;
}
.lines .blue{
	stroke: #2e95d8;
	stroke-width: 2.4;
}
.vsep{
	width: 2px;
	height: 36px;
	margin: 0 14px;
	background: #4f4f4f;
}
.vsep.tight{
	margin: 0 12px;
}
.drop{
	display: flex;
	align-items: center;
	height: 48px;
	padding-right: 8px;
	border: 1px solid #444;
	border-bottom: 2px solid #5a5a5a;
	border-radius: 6px;
	background: #383838;
	font-size: 23px;
}
.drop select{
	appearance: none;
	flex: 1;
	height: 45px;
	padding-left: 11px;
}
.drop.font{ width: 282px; }
.drop.size{ width: 108px; }
.drop.format{ width: 310px; }

.stack{
	display: flex;
	flex-direction: column;
	gap: 12px;
	padding-top: 6px;
}
.stack button{
	justify-content: flex-start;
	gap: 12px;
	height: 32px;
}
.stack button, .big{
	font-size: 21px;
}
.big{
	flex-direction: column;
	padding-top: 6px;
}
.big .pic{
	display: flex;
	align-items: center;
	gap: 8px;
	height: 64px;
	margin-bottom: 10px;
}
.big:disabled{
	color: #828282;
}

/* formula bar */
.formula{
	display: flex;
	flex: none;
	align-items: center;
	height: 58px;
	padding-bottom: 6px;
	background: linear-gradient(#aaa, #fff 50%, #aaa) bottom / 100% 6px no-repeat #222;
}
.namebox{
	display: flex;
	align-items: center;
	width: 170px;
	height: 48px;
	padding: 0 8px 0 20px;
	margin-right: 27px;
	background: #262626;
	color: #dcdcdc;
	font-size: 23px;
}
.namebox input{
	flex: 1;
	min-width: 0;
}
.formula button{
	margin-right: 32px;
}
.formula .fx{
	margin-right: 18px;
	color: #a8a8a8;
	font: italic 36px/40px "Liberation Serif", serif;
}
.fx small{
	font-size: 30px;
}
.bar{
	flex: 1;
	height: 38px;
	padding: 0 8px;
	background: #383838;
}
.formula .expand{
	margin: 0 8px 0 6px;
}

/* grid */
.sheet{
	flex: 1;
	min-height: 0;
	overflow: hidden;
	background: #fff;
	color: #000;
}
table{
	width: 100%;
	table-layout: fixed;
	border-collapse: separate;
	border-spacing: 0;
	font: 21px/28px Lato, "Liberation Sans", sans-serif;
	font-variant-ligatures: none;
}
.w-head{ width: 46px; }
.w-a{ width: 152px; }
.w-b{ width: 194px; }
.w-c{ width: 116px; }
.w-d{ width: 154px; }
.w-g{ width: 268px; }
.w{ width: 106px; }

tr{ height: 30px; }
.h32{ height: 32px; }
.h48{ height: 48px; }
.h96{ height: 96px; }
.h130{ height: 130px; }
.h192{ height: 192px; }

th{
	border-right: 2px solid #c4c4c4;
	border-bottom: 2px solid #5b5b5b;
	background: #171717;
	color: #fff;
	font-size: 20px;
	vertical-align: bottom;
}
thead th{
	height: 44px;
	border-right-color: #5b5b5b;
	border-bottom-color: #c4c4c4;
	vertical-align: middle;
}
thead .all{
	border-right-color: #c4c4c4;
}
.all svg{
	margin-left: 10px;
}
th.sel{
	background: #5b5b5b;
	border-right-color: #1a7346;
}
thead th.sel{
	border-right-color: #5b5b5b;
	border-bottom: 4px solid #1a7346;
}
td{
	height: inherit;
	border-right: 2px solid #d4d4d4;
	border-bottom: 2px solid #d4d4d4;
	text-align: center;
	vertical-align: bottom;
}
.title{
	padding-left: 5px;
	font-size: 33px;
	line-height: 42px;
	text-align: left;
	white-space: pre;
}
.spill{
	border-right-color: transparent;
}
.edge, .k.edge{
	border-bottom: 4px solid #000;
}
.hd{
	padding: 0 2px;
	border-right-color: #000;
	border-bottom: 4px solid #000;
	background: #579bd3;
	color: #fff;
	font-weight: 700;
	line-height: 30px;
	vertical-align: middle;
}
.hd.small{
	font-size: 19px;
	line-height: 28px;
}
.hd.low{
	padding-left: 4px;
	line-height: 28px;
	text-align: left;
	vertical-align: bottom;
}
.k{
	border-right-color: #000;
	border-bottom-color: #000;
}
.band .k{
	background: #dcebf6;
}
.last{
	position: relative;
	border-right: 4px solid #000;
}
.num{
	padding-right: 3px;
	text-align: right;
}
.under{
	border-bottom-color: #000;
}
.side{
	border-right-color: #000;
}
.left{
	padding-left: 4px;
	text-align: left;
	white-space: nowrap;
}
.h96 .left, .h192 .left{
	line-height: 30px;
}
.yellow{
	background: #ffff3d;
}
.resize{
	position: absolute;
	right: -2px;
	bottom: -2px;
	width: 8px;
	height: 8px;
	background: #4a5fb4;
	clip-path: polygon(50% 0, 100% 0, 100% 100%, 0 100%, 0 50%, 50% 50%);
}
.current{
	position: relative;
}
.ring{
	position: absolute;
	inset: -4px;
	border: 4px solid #1a7346;
}
.ring i{
	position: absolute;
	right: -8px;
	bottom: -8px;
	width: 14px;
	height: 14px;
	border: 2px solid #fff;
	background: #1a7346;
}

/* sheet tabs */
.sheets{
	display: flex;
	flex: none;
	align-items: flex-start;
	height: 54px;
	border-top: 2px solid #6a6a6a;
	border-bottom: 2px solid #000;
	background: #323232;
	font-size: 24px;
}
.arrows{
	display: flex;
	gap: 30px;
	width: 122px;
	height: 40px;
	padding-left: 29px;
	border-right: 2px solid #5c5c5c;
}
.tab{
	height: 50px;
	padding: 0 36px;
	background: #222;
	color: #8b8b8b;
	line-height: 48px;
	white-space: pre;
}
.tab.open{
	height: 44px;
	margin-top: -2px;
	padding: 0 44px;
	border-bottom: 2px solid #6a6a6a;
	border-radius: 0 0 5px 5px;
	background: #fff;
	color: #1f8453;
	font-weight: 600;
	line-height: 52px;
}
.add{
	width: 78px;
	height: 40px;
	padding-top: 8px;
	border-right: 2px solid #5c5c5c;
}
.arrows button{
	padding-top: 10px;
}

/* status bar */
.status{
	display: flex;
	flex: none;
	align-items: center;
	height: 44px;
	padding: 0 46px 0 48px;
	background: linear-gradient(#4b4b4b, #3b3b3b);
	font-size: 24px;
}
.access{
	gap: 6px;
	margin-left: 38px;
}
.views{
	display: flex;
	margin-left: auto;
	margin-right: 14px;
}
.views button{
	width: 72px;
	height: 44px;
}
.views .on{
	background: #5c5c5c;
}
.views svg{
	fill: none;
	stroke: #fff;
	stroke-width: 2.4;
}
.status input{
	appearance: none;
	width: 196px;
	height: 8px;
	margin: 0 16px;
	border-radius: 4px;
	background: #7b7b7b;
}
.status input::-webkit-slider-thumb{
	appearance: none;
	width: 22px;
	height: 22px;
	border-radius: 50%;
	background: #d0d0d0;
}
.pct{
	margin-left: 34px;
}
```
